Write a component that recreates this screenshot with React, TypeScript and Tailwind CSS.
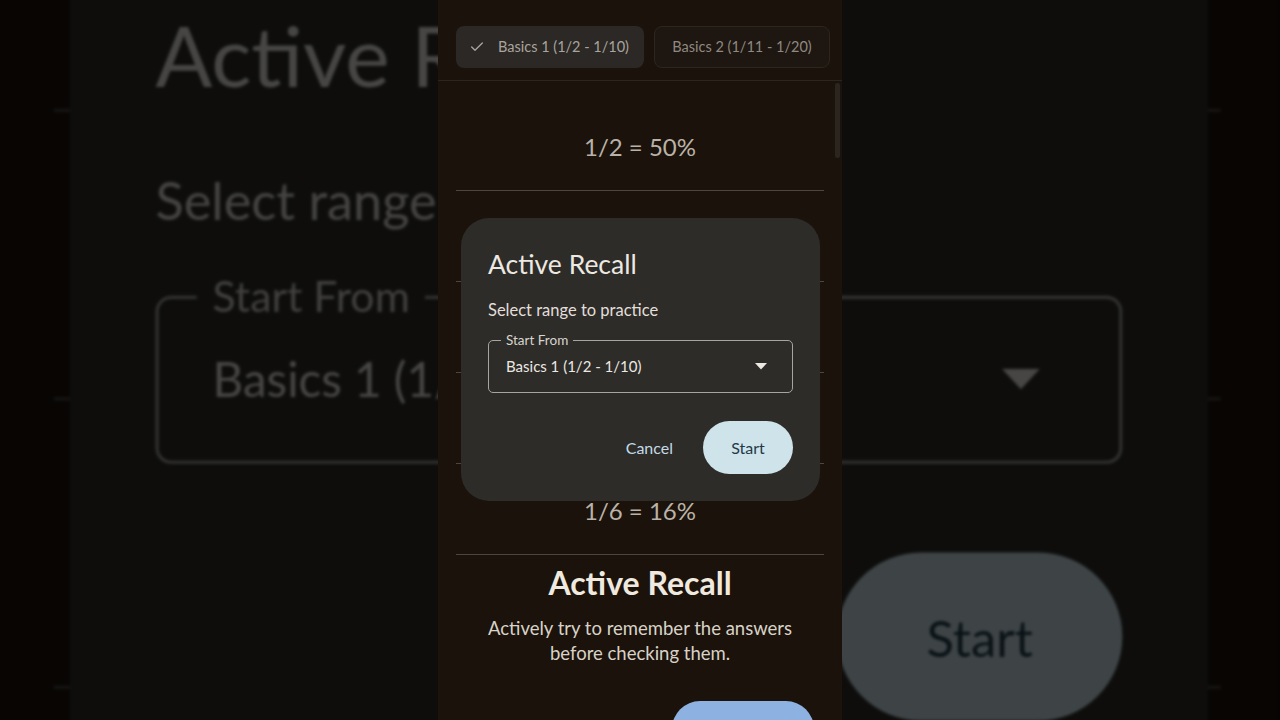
import React from "react";
import { Check } from "lucide-react";

const font = { fontFamily: "Lato, 'Noto Sans', sans-serif" };

function Dialog() {
  return (
    <div className="absolute left-[23px] top-[218px] w-[359px] h-[283px] rounded-[28px] bg-[#2d2c29] flex flex-col px-[27px]">
      <div className="pt-[30px] text-[26.5px] leading-[32px] text-[#ece8e2]">Active Recall</div>
      <div className="mt-[20px] text-[16.5px] leading-[20px] text-[#e3dfd9]">Select range to practice</div>
      <div className="relative mt-[20px] h-[53px] w-[305px] rounded-[5px] border border-[#a8a49e] flex items-center pl-[17px] pr-[25px]">
        <span className="absolute left-[12px] top-[-10px] bg-[#2d2c29] px-[5px] text-[13.5px] leading-[18px] text-[#d8d4ce]">Start From</span>
        <span className="flex-1 text-[15px] text-[#ece8e2]">Basics 1 (1/2 - 1/10)</span>
        <svg width="12" height="7" viewBox="0 0 12 7"><path d="M0 0 L12 0 L6 6.5 Z" fill="#ece8e2" /></svg>
      </div>
      <div className="mt-[28px] flex items-center justify-end gap-[30px]">
        <span className="text-[16px] text-[#c4dbe6]">Cancel</span>
        <div className="h-[53px] w-[90px] rounded-full bg-[#cfe3ea] flex items-center justify-center text-[16px] text-[#1f3a48]">Start</div>
      </div>
    </div>
  );
}

function Phone() {
  const rows = ["1/2 = 50%", "1/3 = 33%", "1/4 = 25%", "1/5 = 20%", "1/6 = 16%"];
  return (
    <div className="relative w-[404px] h-[720px] shrink-0 overflow-hidden bg-[#1b120b]" style={font}>
      <div className="h-[81px] border-b border-[#2b251e] flex items-start gap-[10px] pl-[18px] pt-[26px] overflow-hidden">
        <div className="h-[42px] w-[188px] shrink-0 rounded-[8px] bg-[#2b2825] flex items-center pl-[13px] gap-[13px] text-[14.5px] text-[#a9a49d]">
          <Check size={16} strokeWidth={2} color="#a9a49d" />
          <span>Basics 1 (1/2 - 1/10)</span>
        </div>
        <div className="h-[42px] w-[176px] shrink-0 rounded-[8px] border border-[#2c261f] bg-[#1e1610] flex items-center justify-center text-[14.5px] text-[#8f8981]">
          Basics 2 (1/11 - 1/20)
        </div>
      </div>
      <div className="absolute right-[2px] top-[83px] w-[5px] h-[75px] rounded-[2px] bg-[#2a251f]" />
      <div className="px-[18px] pt-[19px]">
        {rows.map((r) => (
          <div key={r} className="h-[91px] pt-[3px] border-b border-[#4b4640] flex items-center justify-center text-[24px] text-[#bab2a8]">
            {r}
          </div>
        ))}
      </div>
      <div className="mt-[10px] flex flex-col items-center">
        <div className="text-[32px] leading-[36px] font-bold text-[#efe9df]">Active Recall</div>
        <div className="mt-[15px] text-center text-[18.5px] leading-[25px] text-[#d8d2c8]">
          Actively try to remember the answers
          <br />
          before checking them.
        </div>
      </div>
      <div className="mt-[35px] flex justify-end pr-[28px]">
        <div className="h-[56px] w-[142px] rounded-full bg-[#8db1e0]" />
      </div>
      <Dialog />
    </div>
  );
}

export default function App() {
  return (
    <div className="relative w-[1280px] h-[720px] overflow-hidden bg-[#060403] flex justify-center">
      <div className="absolute left-[-3px] top-[-782px] origin-top-left scale-[3.17] brightness-[.3] blur-[0.5px] pointer-events-none">
        <Phone />
      </div>
      <div className="relative">
        <Phone />
      </div>
    </div>
  );
}
